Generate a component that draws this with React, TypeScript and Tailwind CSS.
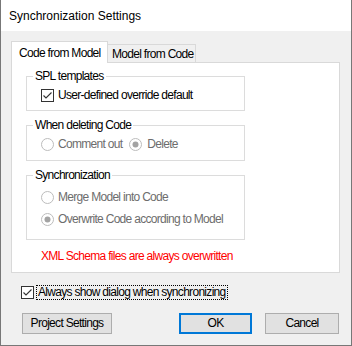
import React from 'react'

// === Small win32-style controls ===

function CheckBox(): React.JSX.Element {
  return (
    <svg width="13" height="13" viewBox="0 0 13 13" className="shrink-0">
      <rect x="0.5" y="0.5" width="12" height="12" fill="#ffffff" stroke="#333333" />
      <path d="M2.5 6.5 L5 9 L10.5 3.5" fill="none" stroke="#333333" strokeWidth="1.1" />
    </svg>
  )
}

function Radio({ checked }: { checked?: boolean }): React.JSX.Element {
  return (
    <svg width="13" height="13" viewBox="0 0 13 13" className="shrink-0">
      <circle cx="6.5" cy="6.5" r="6" fill="#ffffff" stroke="#bcbcbc" />
      {checked && <circle cx="6.5" cy="6.5" r="3" fill="#a3a3a3" />}
    </svg>
  )
}

function GroupBox({
  title,
  className,
  children
}: {
  title: string
  className: string
  children: React.ReactNode
}): React.JSX.Element {
  return (
    <div className={`relative ml-[14px] w-[219px] border border-[#dcdcdc] ${className}`}>
      <span className="absolute -top-[8px] left-[6px] whitespace-nowrap bg-white px-[2px] leading-[15px] text-black">
        {title}
      </span>
      {children}
    </div>
  )
}

function Button({
  label,
  width,
  primary
}: {
  label: string
  width: string
  primary?: boolean
}): React.JSX.Element {
  return (
    <button
      type="button"
      className={
        primary
          ? `h-[21px] ${width} border-2 border-[#0078d7] bg-[#e1e1e1] leading-[15px] text-black`
          : `h-[21px] ${width} border border-[#adadad] bg-[#e1e1e1] leading-[15px] text-black`
      }
    >
      {label}
    </button>
  )
}

// === Dialog ===

export default function App(): React.JSX.Element {
  return (
    <div
      className="flex h-[346px] w-[352px] flex-col whitespace-nowrap border-x border-b border-[#777777] bg-[#f0f0f0] text-[12px] tracking-[-0.7px] text-black"
      style={{ fontFamily: '"Liberation Sans", Arial, sans-serif' }}
    >
      {/* Title bar */}
      <div className="flex h-[31px] shrink-0 items-center bg-white pl-[8px] pt-[1px] tracking-normal">
        Synchronization Settings
      </div>

      <div className="flex flex-col pl-[10px] pt-[10px]">
        {/* Tabs */}
        <div className="flex h-[21px] items-start">
          <div className="relative z-10 flex h-[22px] w-[97px] items-center border-x border-t border-[#d9d9d9] bg-white pl-[7px]">
            Code from Model
          </div>
          <div className="mt-[3px] flex h-[18px] w-[88px] items-center border-r border-t border-[#d9d9d9] bg-[#f0f0f0] pl-[4px] pt-[1px]">
            Model from Code
          </div>
        </div>

        {/* Tab page */}
        <div className="flex h-[211px] w-[329px] flex-col border border-[#d9d9d9] bg-white">
          <GroupBox title="SPL templates" className="mt-[13px] h-[35px]">
            <div className="mt-[11px] flex h-[15px] items-center gap-[4px] pl-[14px]">
              <CheckBox />
              <span className="leading-[15px]">User-defined override default</span>
            </div>
          </GroupBox>

          <GroupBox title="When deleting Code" className="mt-[14px] h-[36px]">
            <div className="mt-[11px] flex h-[15px] items-center pl-[14px] text-[#6d6d6d]">
              <Radio />
              <span className="ml-[4px] leading-[15px]">Comment out</span>
              <span className="ml-[7px]">
                <Radio checked />
              </span>
              <span className="ml-[5px] leading-[15px]">Delete</span>
            </div>
          </GroupBox>

          <GroupBox title="Synchronization" className="mt-[14px] h-[65px]">
            <div className="mt-[14px] flex flex-col gap-[7px] pl-[14px] text-[#6d6d6d]">
              <div className="flex h-[15px] items-center gap-[4px]">
                <Radio />
                <span className="leading-[15px]">Merge Model into Code</span>
              </div>
              <div className="flex h-[15px] items-center gap-[4px]">
                <Radio checked />
                <span className="leading-[15px]">Overwrite Code according to Model</span>
              </div>
            </div>
          </GroupBox>

          <div className="ml-[29px] mt-[9px] leading-[15px] text-[#ff0000]">
            XML Schema files are always overwritten
          </div>
        </div>

        {/* Footer */}
        <div className="ml-[10px] mt-[12px] flex h-[15px] items-center gap-[2px]">
          <CheckBox />
          <span className="border border-dotted border-black px-[1px] leading-[13px]">
            Always show dialog when synchronizing
          </span>
        </div>

        <div className="mt-[13px] flex items-start">
          <span className="ml-[11px]">
            <Button label="Project Settings" width="w-[90px]" />
          </span>
          <span className="ml-[67px]">
            <Button label="OK" width="w-[73px]" primary />
          </span>
          <span className="ml-[13px]">
            <Button label="Cancel" width="w-[74px]" />
          </span>
        </div>
      </div>
    </div>
  )
}
